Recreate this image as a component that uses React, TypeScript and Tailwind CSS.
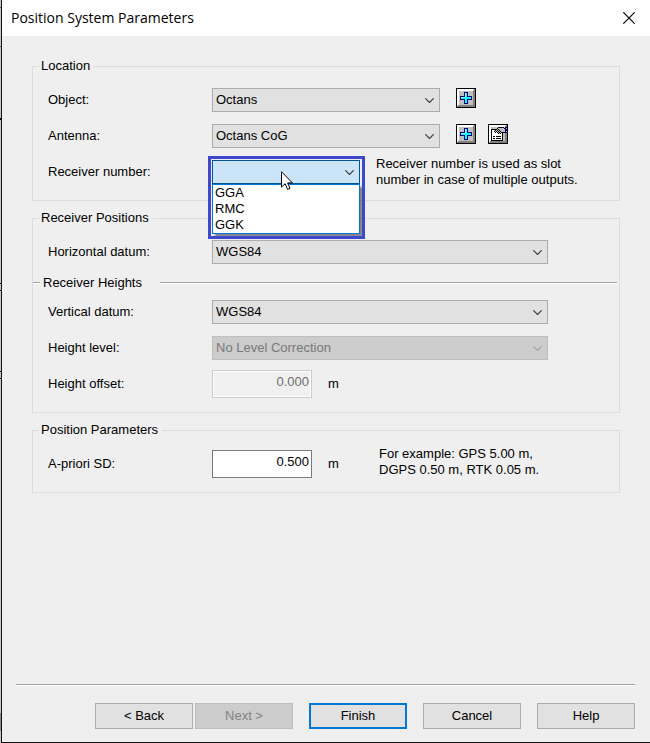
import { useState, type ReactNode } from 'react'

const OUTPUTS = ['GGA', 'RMC', 'GGK']

function Chevron({ className }: { className: string }) {
  return (
    <svg viewBox="0 0 9 5" className={`pointer-events-none absolute top-[10px] right-[6px] h-[5px] w-[9px] ${className}`} fill="none" stroke="currentColor">
      <path d="M0.3 0.3 4.5 4.5 8.7 0.3" strokeWidth="1.2" />
    </svg>
  )
}

function Group({ title, children }: { title: string; children: ReactNode }) {
  return (
    <fieldset className="border border-[#dcdcdc]">
      <legend className="ml-[6px] pr-1 pl-[2px]">{title}</legend>
      {children}
    </fieldset>
  )
}

interface RowProps {
  id: string
  label: string
  className?: string
  children: ReactNode
}

function Row({ id, label, className = 'h-6', children }: RowProps) {
  return (
    <div className={`flex items-center pl-[15px] ${className}`}>
      <label htmlFor={id} className="w-[164px] shrink-0">{label}</label>
      {children}
    </div>
  )
}

interface SelectProps {
  id: string
  value: string
  width: string
  disabled?: boolean
}

function Select({ id, value, width, disabled }: SelectProps) {
  return (
    <div className={`relative h-6 shrink-0 ${width}`}>
      <select
        id={id}
        disabled={disabled}
        defaultValue={value}
        className="h-full w-full appearance-none border border-[#adadad] bg-[#e1e1e1] pl-[3px] opacity-100 disabled:border-[#bfbfbf] disabled:bg-[#cccccc] disabled:text-[#787878]"
      >
        <option>{value}</option>
      </select>
      <Chevron className={disabled ? 'text-[#a5a5a5]' : 'text-[#404040]'} />
    </div>
  )
}

function ToolButton({ label, children }: { label: string; children: ReactNode }) {
  return (
    <button type="button" aria-label={label} className="ml-3 h-5 w-5 shrink-0 self-start first-of-type:ml-4">
      <svg viewBox="0 0 20 20" className="h-5 w-5" shapeRendering="crispEdges">
        <path fill="#000" d="M0 0h20v20H0z" />
        <path fill="#fff" d="M1 1h18v18H1z" />
        <path fill="#808080" d="M19 1v18H1v-1h1v-1h15V2h1V1z" />
        <path fill="#c0c0c0" d="M3 3h14v14H3z" />
        {children}
      </svg>
    </button>
  )
}

function PlusIcon() {
  return (
    <>
      <path fill="#000080" d="M8 4h4v4h4v4h-4v4H8v-4H4V8h4z" />
      <path fill="#00ffff" d="M9 5h2v4h4v2h-4v4H9v-4H5V9h4z" />
      <path fill="#fff" d="M9 5h1v4H9zM5 9h4v1H5z" opacity="0.6" />
    </>
  )
}

// a hand holding a sheet, drawn pixel by pixel
function PropertiesIcon() {
  return (
    <>
      <path fill="#000" d="M3 5h12v12H3z" />
      <path fill="#fff" d="M4 6h10v10H4z" />
      <path fill="#000" d="M5 12h2v1H5zM8 12h5v1H8zM5 14h2v1H5zM8 14h5v1H8z" />
      <path fill="#c0c0c0" d="M9 4h8v4h-4v2h-2V9H9V8H7V6h1V5h1zM15 9h2v8h-2z" />
      <path fill="#000" d="M10 3h6v1h-6zM9 4h1v1H9zM8 5h1v1H8zM7 6h1v1H7zM6 7h1v1H6zM7 8h1v1H7zM9 6h1v1H9zM8 7h1v1H8zM10 5h1v1h-1zM10 7h1v1h-1zM9 8h1v1H9zM11 6h1v1h-1zM11 8h1v1h-1zM12 7h1v1h-1zM10 9h1v1h-1zM12 9h1v1h-1zM13 8h1v1h-1zM14 8h3v1h-3zM16 4h1v1h-1z" />
      <path fill="#000080" d="M17 3h2v6h-2z" />
      <path fill="#c0c0c0" d="M18 4h1v1h-1zM18 7h1v1h-1z" />
    </>
  )
}

function Line({ className }: { className: string }) {
  return <div className={`h-[2px] border-b border-white bg-[#a0a0a0] ${className}`} />
}

const button = 'h-[26px] w-[98px] border border-[#adadad] bg-[#e1e1e1] disabled:border-[#bfbfbf] disabled:bg-[#cccccc] disabled:text-[#838383]'

export default function App() {
  const [output, setOutput] = useState('')
  const [open, setOpen] = useState(true)

  return (
    <div className="relative flex min-h-screen border-l border-[#c8c8c8] font-['Liberation_Sans',Arial,sans-serif] text-[13px] leading-4 text-black">
      {/* edge of the window behind */}
      <svg viewBox="0 0 1 743" className="absolute top-0 -left-px h-[743px] w-px" shapeRendering="crispEdges" aria-hidden="true">
        <path fill="#555" d="M0 7h1v1H0zM0 46h1v1H0z" />
        <path fill="#000" d="M0 118h1v2H0zM0 283h1v1H0zM0 290h1v1H0zM0 371h1v1H0zM0 378h1v1H0z" />
        <path fill="#8a8a8a" d="M0 713h1v18H0z" />
      </svg>
      <div className="flex flex-1 flex-col border-b border-l border-[#111111] bg-[#efefef]">
        <header className="flex h-9 items-center justify-between bg-white pr-[15px] pl-[9px]">
          <h1 className="font-['Open_Sans',sans-serif] text-[14px]">Position System Parameters</h1>
          <button type="button" aria-label="Close">
            <svg viewBox="0 0 12 12" className="h-3 w-3" fill="none" stroke="currentColor">
              <path d="M0.3 0.3 11.7 11.7M11.7 0.3 0.3 11.7" strokeWidth="1.2" />
            </svg>
          </button>
        </header>

        <main className="flex flex-1 flex-col gap-[9px] px-[30px] pt-[22px]">
          <Group title="Location">
            <div className="flex flex-col gap-3 pt-[14px] pb-4">
              <Row id="object" label="Object:">
                <Select id="object" value="Octans" width="w-[228px]" />
                <ToolButton label="Add object"><PlusIcon /></ToolButton>
              </Row>
              <Row id="antenna" label="Antenna:">
                <Select id="antenna" value="Octans CoG" width="w-[228px]" />
                <ToolButton label="Add antenna"><PlusIcon /></ToolButton>
                <ToolButton label="Antenna properties"><PropertiesIcon /></ToolButton>
              </Row>
              <Row id="receiver" label="Receiver number:">
                <div className="relative h-6 w-[148px] shrink-0">
                  <button
                    id="receiver"
                    type="button"
                    aria-haspopup="listbox"
                    aria-expanded={open}
                    onClick={() => setOpen(!open)}
                    className="h-full w-full border border-[#005499] bg-[#cce4f7] pl-[3px] text-left"
                  >
                    {output}
                  </button>
                  <Chevron className="text-[#404040]" />
                  {open && (
                    <ul role="listbox" className="absolute top-full left-0 z-10 w-full border border-[#0078d7] bg-white shadow-[3px_3px_2px_rgba(0,0,0,0.45)]">
                      {OUTPUTS.map((name) => (
                        <li
                          key={name}
                          role="option"
                          aria-selected={name === output}
                          onClick={() => {
                            setOutput(name)
                            setOpen(false)
                          }}
                          className="pl-[2px]"
                        >
                          {name}
                        </li>
                      ))}
                    </ul>
                  )}
                  {/* highlight frame around the open list */}
                  <div className="pointer-events-none absolute -top-1 -left-1 z-20 h-[83px] w-[157px] border-3 border-[#3f48cc]" />
                  <svg viewBox="0 0 12 19" className="pointer-events-none absolute top-[11px] left-[69px] z-30 h-[19px] w-3">
                    <path d="M0.5 0.8V16.2L4.1 12.7 6.6 18.4 9 17.4 6.6 11.9H11.4Z" fill="#fff" stroke="#000" strokeWidth="1" />
                  </svg>
                </div>
                <p className="ml-4 w-[220px]">Receiver number is used as slot number in case of multiple outputs.</p>
              </Row>
            </div>
          </Group>

          <Group title="Receiver Positions">
            <div className="flex flex-col pt-[14px] pb-[14px]">
              <Row id="hdatum" label="Horizontal datum:">
                <Select id="hdatum" value="WGS84" width="w-[336px]" />
              </Row>
              <div className="mt-[11px] mb-[9px] flex items-center">
                <Line className="w-[7px]" />
                <h2 className="ml-[3px] w-[117px]">Receiver Heights</h2>
                <Line className="mr-[2px] flex-1" />
              </div>
              <Row id="vdatum" label="Vertical datum:">
                <Select id="vdatum" value="WGS84" width="w-[336px]" />
              </Row>
              <Row id="level" label="Height level:" className="mt-3 h-6">
                <Select id="level" value="No Level Correction" width="w-[336px]" disabled />
              </Row>
              <Row id="offset" label="Height offset:" className="mt-[10px] h-7">
                <input
                  id="offset"
                  disabled
                  defaultValue="0.000"
                  className="h-7 w-[100px] border border-[#cccccc] bg-[#f0f0f0] pr-[2px] pb-[6px] text-right text-[#6d6d6d] inset-ring inset-ring-white"
                />
                <span className="ml-4">m</span>
              </Row>
            </div>
          </Group>

          <Group title="Position Parameters">
            <div className="pt-3 pb-[14px]">
              <Row id="sd" label="A-priori SD:" className="h-7">
                <input
                  id="sd"
                  defaultValue="0.500"
                  className="h-7 w-[100px] border border-[#7a7a7a] bg-white pr-[2px] pb-[6px] text-right"
                />
                <span className="ml-4 w-[51px]">m</span>
                <p className="w-[170px] pb-1">For example: GPS 5.00 m, DGPS 0.50 m, RTK 0.05 m.</p>
              </Row>
            </div>
          </Group>
        </main>

        <footer className="pr-[15px] pb-[13px] pl-[14px]">
          <Line className="w-full" />
          <div className="mt-[17px] flex justify-end gap-4">
            <div className="flex gap-[2px]">
              <button type="button" className={button}>&lt; Back</button>
              <button type="button" disabled className={button}>Next &gt;</button>
            </div>
            <button type="button" className="h-[26px] w-[98px] border-2 border-[#0078d7] bg-[#e1e1e1]">Finish</button>
            <button type="button" className={button}>Cancel</button>
            <button type="button" className={button}>Help</button>
          </div>
        </footer>
      </div>
    </div>
  )
}
